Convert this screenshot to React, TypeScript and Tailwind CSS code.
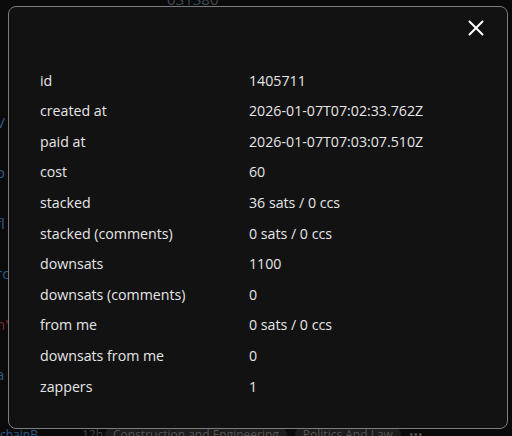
import { X } from "lucide-react";

const rows: [string, string][] = [
  ["id", "1405711"],
  ["created at", "2026-01-07T07:02:33.762Z"],
  ["paid at", "2026-01-07T07:03:07.510Z"],
  ["cost", "60"],
  ["stacked", "36 sats / 0 ccs"],
  ["stacked (comments)", "0 sats / 0 ccs"],
  ["downsats", "1100"],
  ["downsats (comments)", "0"],
  ["from me", "0 sats / 0 ccs"],
  ["downsats from me", "0"],
  ["zappers", "1"],
];

export default function App() {
  return (
    <div
      className="relative w-[512px] h-[436px] overflow-hidden bg-[#0a0a0a]"
      style={{ fontFamily: '"Open Sans", "Noto Sans", sans-serif' }}
    >
      {/* page behind the modal */}
      <div className="flex flex-col h-full text-[15px] text-[#4a4a4a]">
        <div className="pl-[167px] -mt-[12px] text-[#3f4a55]">031380</div>
        <div className="flex flex-col gap-[28px] mt-[100px] -ml-[4px] text-[#2a5a86]">
          <span>V</span>
          <span>o</span>
          <span>fl</span>
          <span>rc</span>
          <span className="text-[#7a2a2a]">n"</span>
          <span>a</span>
        </div>
        <div className="mt-auto flex items-center -mb-[8px] text-[12px]">
          <span className="w-[82px] text-[#2a5a86]">chainB</span>
          <span className="w-[23px] text-[#444]">12h</span>
          <span className="rounded-full bg-[#1c1c1c] px-2 text-[#555]">Construction and Engineering</span>
          <span className="ml-2 rounded-full bg-[#1c1c1c] px-2 text-[#555]">Politics And Law</span>
          <span className="ml-2 text-[#555]">•••</span>
        </div>
      </div>

      {/* modal */}
      <div className="absolute left-[8px] top-[6px] w-[500px] h-[423px] rounded-[8px] border border-[#7d7d7d] bg-[#121212]">
        <button className="absolute right-[18px] top-[8px] text-white">
          <X size={26} strokeWidth={1.8} />
        </button>
        <div className="pl-[31px] pt-[58px] flex flex-col text-[14.2px] text-[#e6e6e6]">
          {rows.map(([label, value]) => (
            <div key={label} className="flex h-[30.6px] items-center">
              <span className="w-[209px]">{label}</span>
              <span>{value}</span>
            </div>
          ))}
        </div>
      </div>
    </div>
  );
}
